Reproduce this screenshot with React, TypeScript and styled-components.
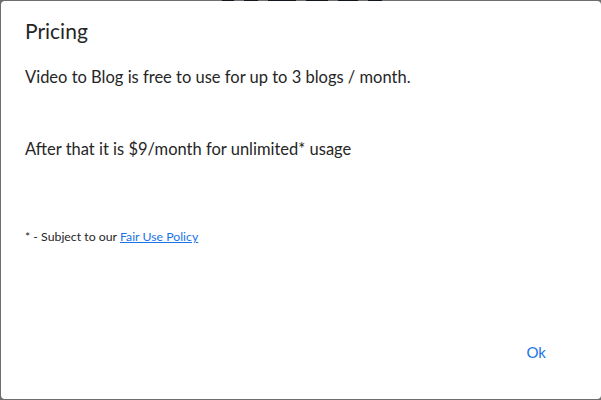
import React from "react";
import styled, { createGlobalStyle } from "styled-components";

const Global = createGlobalStyle`
  html, body { margin: 0; padding: 0; }
  body {
    width: 601px;
    height: 400px;
    background: #6e6e6e;
    overflow: hidden;
    font-family: Lato, "Open Sans", sans-serif;
  }
`;

const Backdrop = styled.div`
  position: relative;
  width: 601px;
  height: 400px;
  box-sizing: border-box;
  padding: 1px 0 1px 1px;
`;

const TopStrip = styled.div`
  position: absolute;
  top: 0;
  left: 222px;
  display: flex;
  gap: 10px;
  height: 1px;
`;

const Blot = styled.span<{ $w: number }>`
  display: block;
  width: ${(p) => p.$w}px;
  height: 1px;
  background: #11151c;
`;

const Dialog = styled.div`
  width: 600px;
  height: 398px;
  box-sizing: border-box;
  background: #fff;
  border-radius: 4px;
  display: flex;
  flex-direction: column;
  color: #262626;
`;

const Title = styled.h2`
  margin: 0;
  padding: 14px 24px 0;
  font-size: 21px;
  font-weight: 400;
  line-height: 32px;
`;

const Content = styled.div`
  flex: 1;
  padding: 18px 24px 0;
`;

const Para = styled.p<{ $gap: number }>`
  margin: 0 0 ${(p) => p.$gap}px;
  font-size: 16.5px;
  line-height: 24px;
`;

const Note = styled.p`
  margin: 0;
  font-size: 12.3px;
  line-height: 16px;
`;

const Link = styled.a`
  color: #1a73e8;
  text-decoration: underline;
`;

const Actions = styled.div`
  display: flex;
  justify-content: flex-end;
  padding: 0 47px 32px;
`;

const OkButton = styled.button`
  border: none;
  background: none;
  padding: 6px 8px;
  font-family: inherit;
  font-size: 15px;
  color: #1a73e8;
  cursor: pointer;
`;

export default function App() {
  return (
    <>
      <Global />
      <Backdrop>
        <TopStrip>
          <Blot $w={12} />
          <Blot $w={14} />
          <Blot $w={28} />
          <Blot $w={22} />
          <Blot $w={20} />
          <Blot $w={14} />
        </TopStrip>
        <Dialog>
          <Title>Pricing</Title>
          <Content>
            <Para $gap={48}>Video to Blog is free to use for up to 3 blogs / month.</Para>
            <Para $gap={68}>After that it is $9/month for unlimited* usage</Para>
            <Note>
              * - Subject to our <Link href="#">Fair Use Policy</Link>
            </Note>
          </Content>
          <Actions>
            <OkButton>Ok</OkButton>
          </Actions>
        </Dialog>
      </Backdrop>
    </>
  );
}
